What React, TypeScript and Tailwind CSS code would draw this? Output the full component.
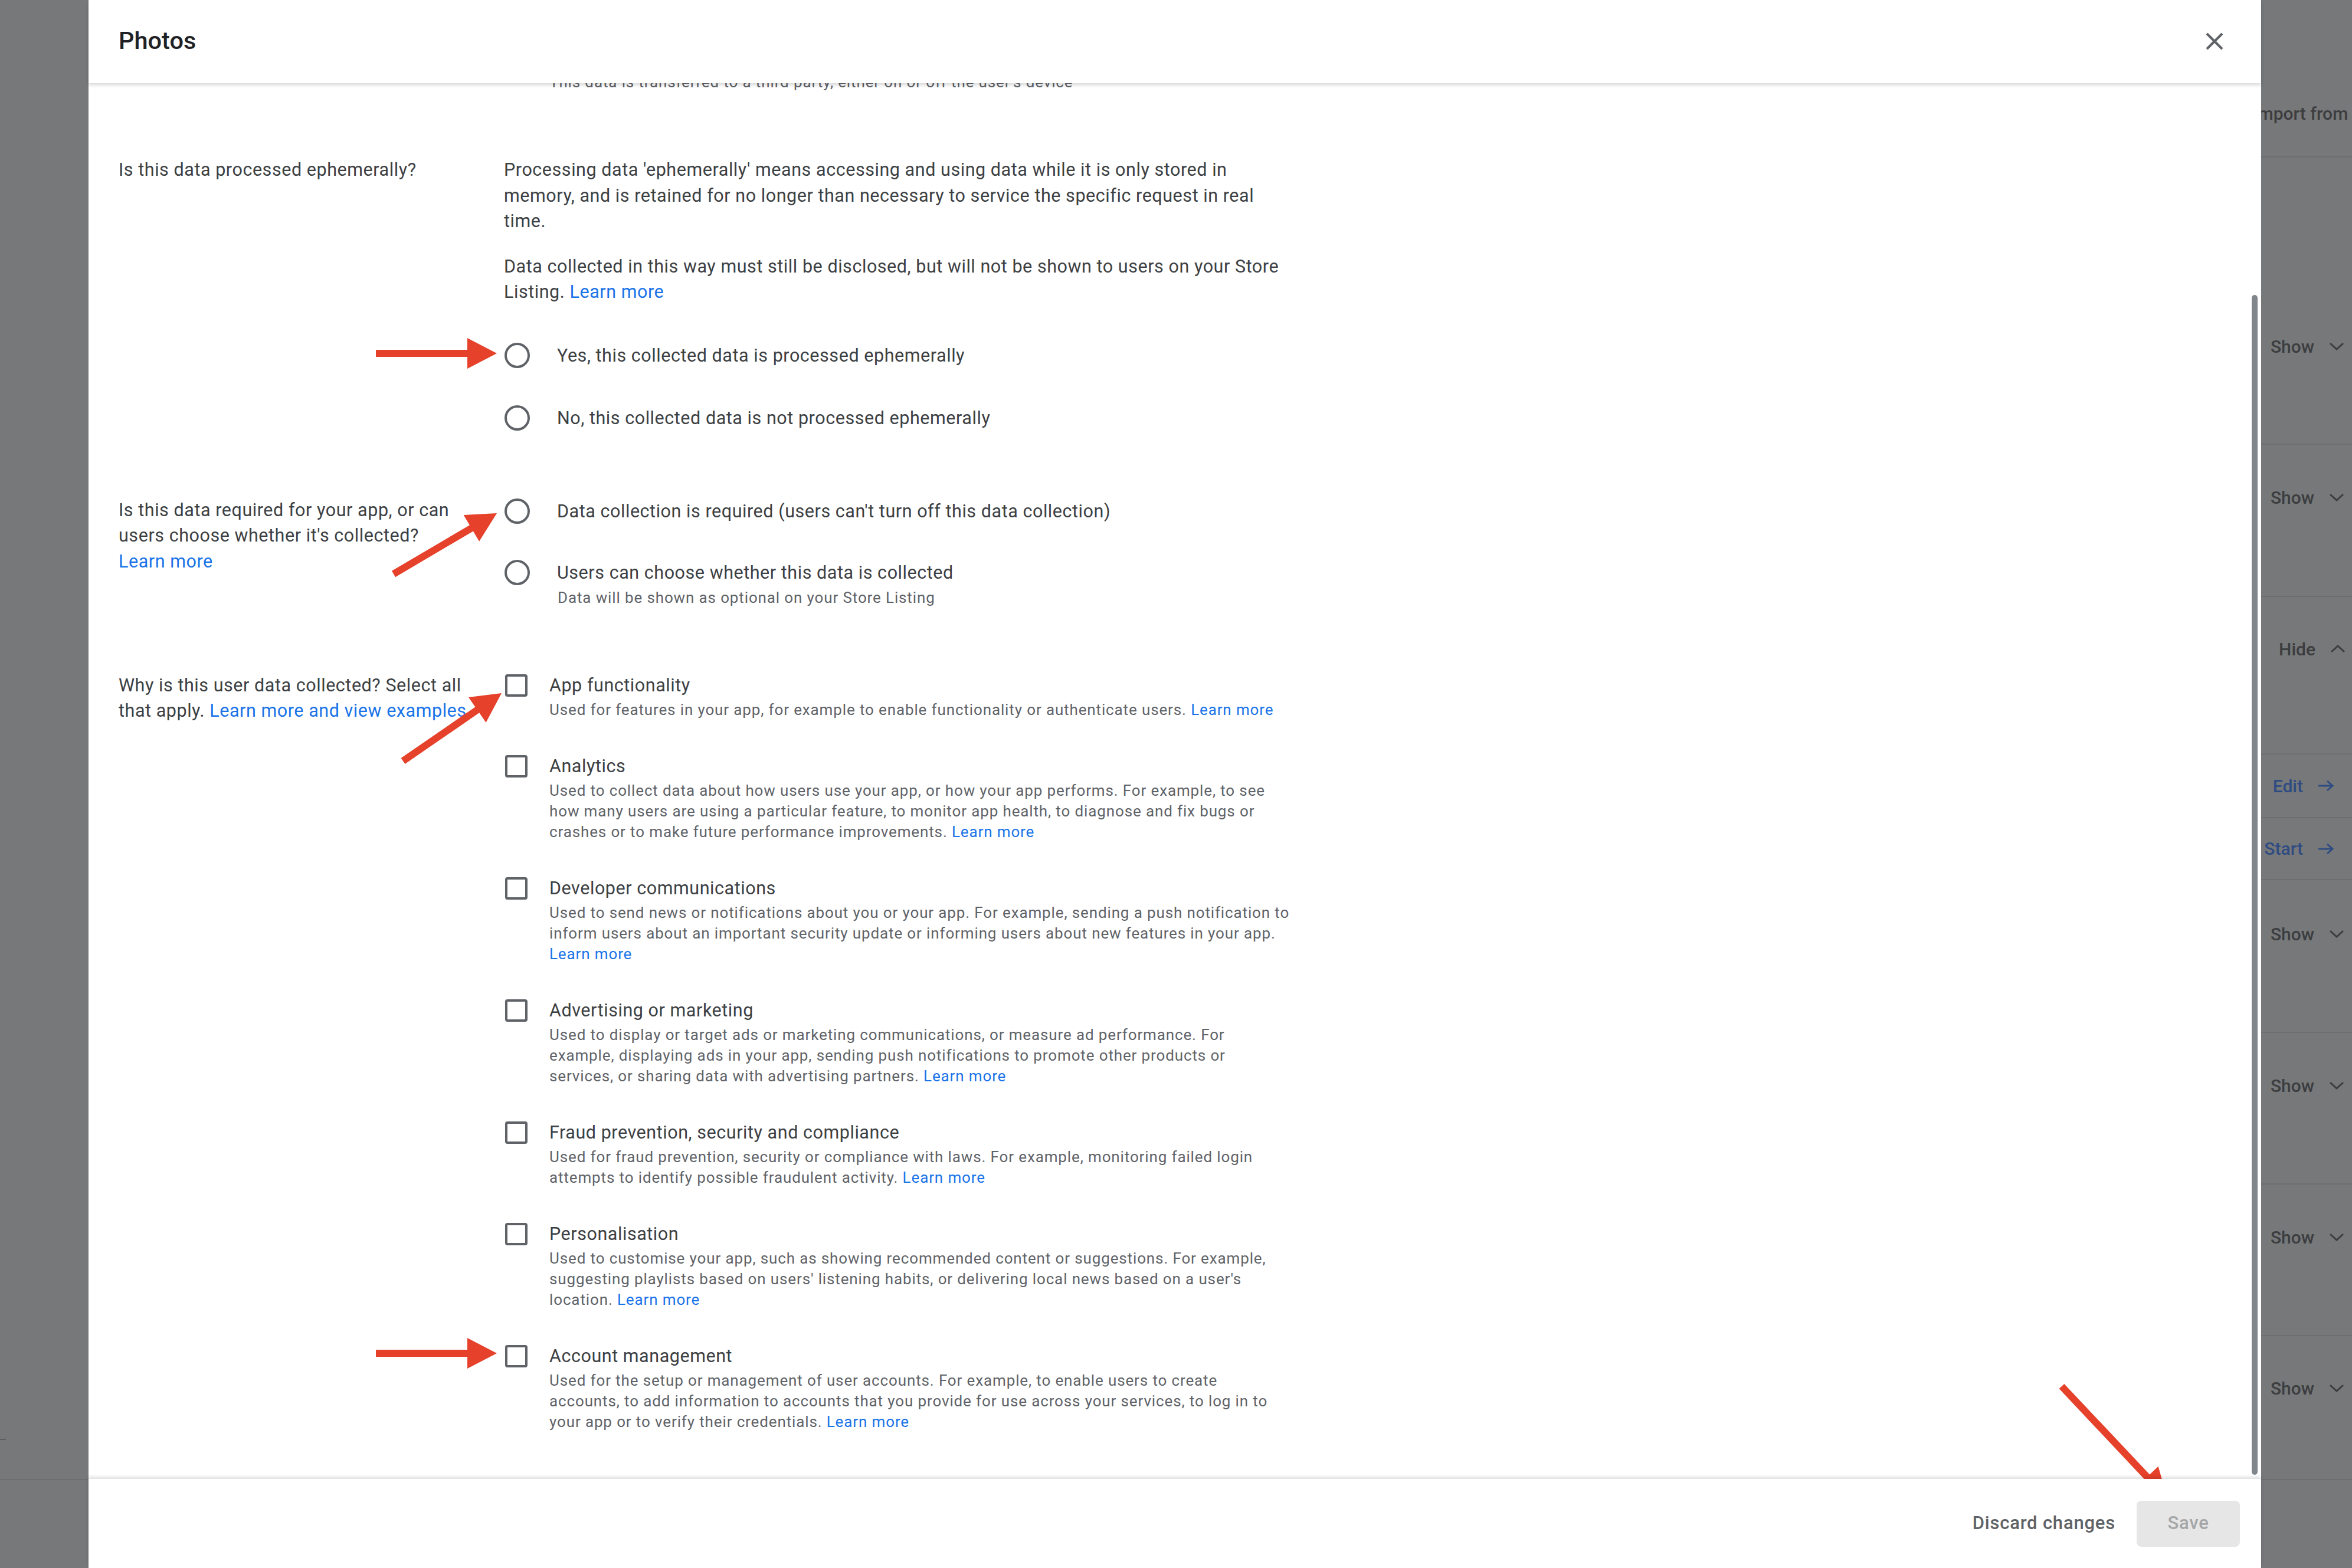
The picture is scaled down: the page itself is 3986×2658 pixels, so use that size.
import React from 'react'

type Arrow = { x1: number; y1: number; x2: number; y2: number }

const ARROWS: Arrow[] = [
    { x1: 637, y1: 599, x2: 842, y2: 599 },
    { x1: 667, y1: 973, x2: 842, y2: 870 },
    { x1: 683, y1: 1290, x2: 850, y2: 1175 },
    { x1: 637, y1: 2294, x2: 842, y2: 2294 },
    { x1: 3494, y1: 2350, x2: 3673, y2: 2540 },
]

const PURPOSES: { title: string; lines: string[] }[] = [
    {
        title: 'App functionality',
        lines: ['Used for features in your app, for example to enable functionality or authenticate users.'],
    },
    {
        title: 'Analytics',
        lines: [
            'Used to collect data about how users use your app, or how your app performs. For example, to see',
            'how many users are using a particular feature, to monitor app health, to diagnose and fix bugs or',
            'crashes or to make future performance improvements.',
        ],
    },
    {
        title: 'Developer communications',
        lines: [
            'Used to send news or notifications about you or your app. For example, sending a push notification to',
            'inform users about an important security update or informing users about new features in your app.',
            '',
        ],
    },
    {
        title: 'Advertising or marketing',
        lines: [
            'Used to display or target ads or marketing communications, or measure ad performance. For',
            'example, displaying ads in your app, sending push notifications to promote other products or',
            'services, or sharing data with advertising partners.',
        ],
    },
    {
        title: 'Fraud prevention, security and compliance',
        lines: [
            'Used for fraud prevention, security or compliance with laws. For example, monitoring failed login',
            'attempts to identify possible fraudulent activity.',
        ],
    },
    {
        title: 'Personalisation',
        lines: [
            'Used to customise your app, such as showing recommended content or suggestions. For example,',
            "suggesting playlists based on users' listening habits, or delivering local news based on a user's",
            'location.',
        ],
    },
    {
        title: 'Account management',
        lines: [
            'Used for the setup or management of user accounts. For example, to enable users to create',
            'accounts, to add information to accounts that you provide for use across your services, to log in to',
            'your app or to verify their credentials.',
        ],
    },
]

function arrowPoints({ x1, y1, x2, y2 }: Arrow) {
    const dx = x2 - x1
    const dy = y2 - y1
    const len = Math.hypot(dx, dy)
    const ux = dx / len
    const uy = dy / len
    const nx = -uy
    const ny = ux
    const s = 6
    const h = 26
    const bx = x2 - ux * 50
    const by = y2 - uy * 50
    const pts = [
        [x1 + nx * s, y1 + ny * s],
        [bx + nx * s, by + ny * s],
        [bx + nx * h, by + ny * h],
        [x2, y2],
        [bx - nx * h, by - ny * h],
        [bx - nx * s, by - ny * s],
        [x1 - nx * s, y1 - ny * s],
    ]
    return pts.map((p) => p.join(',')).join(' ')
}

const LearnMore = ({ children = 'Learn more' }: { children?: string }) => (
    <a className="text-[#1a73e8] cursor-pointer">{children}</a>
)

function Chevron({ up = false }: { up?: boolean }) {
    return (
        <svg width="26" height="14" viewBox="0 0 26 14" fill="none" stroke="#3c3d3f" strokeWidth="3">
            <polyline points={up ? '2,12 13,2 24,12' : '2,2 13,12 24,2'} />
        </svg>
    )
}

function RightArrow() {
    return (
        <svg width="27" height="20" viewBox="0 0 27 20" fill="none" stroke="#2f4c82" strokeWidth="3">
            <line x1="1" y1="10" x2="25" y2="10" />
            <polyline points="16,2 25,10 16,18" />
        </svg>
    )
}

function BackdropRow({ h, pt, label, kind, pr }: { h: string; pt?: string; label: string; kind: 'show' | 'hide' | 'link'; pr: string }) {
    return (
        <div className={`${h} ${pt ?? ''} border-t-2 border-[#6d6e70] flex ${pt ? 'items-start' : 'items-center'} justify-end ${pr}`}>
            <div className="flex items-center gap-[25px] h-[44px]">
                <span className={`text-[30px] font-medium ${kind === 'link' ? 'text-[#2f4c82]' : 'text-[#3c3d3f]'}`}>{label}</span>
                {kind === 'link' ? <RightArrow /> : <Chevron up={kind === 'hide'} />}
            </div>
        </div>
    )
}

function Radio({ label }: { label: string }) {
    return (
        <div className="flex items-center h-[44px]">
            <div className="ml-px w-[43px] h-[43px] rounded-full border-[4px] border-[#5f6368] shrink-0"></div>
            <span className="ml-[46px] whitespace-nowrap">{label}</span>
        </div>
    )
}

function Purpose({ title, lines }: { title: string; lines: string[] }) {
    return (
        <div className="flex">
            <div className="h-[44px] flex items-center shrink-0">
                <div className="ml-[2px] w-[38px] h-[38px] rounded-[4px] border-[4px] border-[#5f6368]"></div>
            </div>
            <div className="ml-[37px]">
                <div className="h-[44px] whitespace-nowrap">{title}</div>
                <div className="mt-[2px] text-[26px] tracking-[0.87px] leading-[35px] text-[#5f6368]">
                    {lines.map((line, i) => (
                        <div key={i} className="whitespace-nowrap h-[35px]">
                            {line}
                            {i === lines.length - 1 && (
                                <>
                                    {line ? ' ' : ''}
                                    <LearnMore />
                                </>
                            )}
                        </div>
                    ))}
                </div>
            </div>
        </div>
    )
}

export default function App() {
    return (
        <div className="relative w-[3986px] h-[2658px] overflow-hidden bg-[#77787a] font-['Roboto','Liberation_Sans',sans-serif]">
            {/* page behind the dialog */}
            <div className="flex h-full">
                <div className="w-[150px] flex flex-col">
                    <div className="h-[2439px]"></div>
                    <div className="h-[2px] w-[10px] bg-[#5e5f61]"></div>
                    <div className="h-[66px]"></div>
                    <div className="flex-1 border-t-2 border-[#6d6e70]"></div>
                </div>
                <div className="flex-1"></div>
                <div className="w-[300px] flex flex-col">
                    <div className="h-[265px] pt-[171px] pl-[132px]">
                        <span className="text-[30px] font-medium text-[#3c3d3f] whitespace-nowrap leading-[44px]">Import from</span>
                    </div>
                    <BackdropRow h="h-[487px]" pt="pt-[298px]" label="Show" kind="show" pr="pr-[13px]" />
                    <BackdropRow h="h-[258px]" pt="pt-[67px]" label="Show" kind="show" pr="pr-[13px]" />
                    <BackdropRow h="h-[267px]" pt="pt-[66px]" label="Hide" kind="hide" pr="pr-[11px]" />
                    <BackdropRow h="h-[108px]" label="Edit" kind="link" pr="pr-[31px]" />
                    <BackdropRow h="h-[105px]" label="Start" kind="link" pr="pr-[31px]" />
                    <BackdropRow h="h-[259px]" pt="pt-[69px]" label="Show" kind="show" pr="pr-[13px]" />
                    <BackdropRow h="h-[257px]" pt="pt-[67px]" label="Show" kind="show" pr="pr-[13px]" />
                    <BackdropRow h="h-[257px]" pt="pt-[67px]" label="Show" kind="show" pr="pr-[13px]" />
                    <BackdropRow h="h-[244px]" pt="pt-[66px]" label="Show" kind="show" pr="pr-[13px]" />
                    <div className="flex-1 border-t-2 border-[#6d6e70]"></div>
                </div>
            </div>

            {/* dialog */}
            <div className="absolute top-0 bottom-0 left-[150px] w-[3682px] bg-white flex flex-col">
                <header className="relative z-10 h-[141px] shrink-0 bg-white flex items-center justify-between pl-[51px] pr-[64px] shadow-[0_3px_6px_rgba(0,0,0,0.16)]">
                    <h1 className="text-[41.5px] font-medium text-[#202124] -mt-[3px]">Photos</h1>
                    <svg width="30" height="30" viewBox="0 0 30 30" stroke="#5f6368" strokeWidth="4" className="-mt-[2px]">
                        <line x1="2" y1="2" x2="28" y2="28" />
                        <line x1="28" y1="2" x2="2" y2="28" />
                    </svg>
                </header>

                <div className="relative flex-1 overflow-hidden">
                    <div className="-mt-[19px] pl-[51px] text-[30.5px] tracking-[0.55px] leading-[43.5px] text-[#3c4043]">
                        <div className="ml-[730px] text-[26px] tracking-[0.87px] leading-[35px] text-[#5f6368] whitespace-nowrap">
                            This data is transferred to a third party, either on or off the user's device
                        </div>

                        {/* ephemeral */}
                        <div className="flex mt-[109px]">
                            <div className="w-[653px] shrink-0 pr-[40px]">Is this data processed ephemerally?</div>
                            <div>
                                <p className="whitespace-nowrap">
                                    Processing data 'ephemerally' means accessing and using data while it is only stored in
                                    <br />
                                    memory, and is retained for no longer than necessary to service the specific request in real
                                    <br />
                                    time.
                                </p>
                                <p className="mt-[33px] whitespace-nowrap">
                                    Data collected in this way must still be disclosed, but will not be shown to users on your Store
                                    <br />
                                    Listing. <LearnMore />
                                </p>
                                <div className="mt-[64px]">
                                    <Radio label="Yes, this collected data is processed ephemerally" />
                                </div>
                                <div className="mt-[62px]">
                                    <Radio label="No, this collected data is not processed ephemerally" />
                                </div>
                            </div>
                        </div>

                        {/* required */}
                        <div className="flex mt-[112px]">
                            <div className="w-[653px] shrink-0 whitespace-nowrap">
                                Is this data required for your app, or can
                                <br />
                                users choose whether it's collected?
                                <br />
                                <LearnMore />
                            </div>
                            <div className="pt-[2px]">
                                <Radio label="Data collection is required (users can't turn off this data collection)" />
                                <div className="mt-[60px]">
                                    <Radio label="Users can choose whether this data is collected" />
                                </div>
                                <div className="mt-[3px] ml-[91px] text-[26px] tracking-[0.87px] leading-[35px] text-[#5f6368] whitespace-nowrap">
                                    Data will be shown as optional on your Store Listing
                                </div>
                            </div>
                        </div>

                        {/* purposes */}
                        <div className="flex mt-[109px]">
                            <div className="w-[653px] shrink-0 whitespace-nowrap">
                                Why is this user data collected? Select all
                                <br />
                                that apply. <LearnMore>Learn more and view examples</LearnMore>
                            </div>
                            <div className="flex flex-col gap-[56px]">
                                {PURPOSES.map((p) => (
                                    <Purpose key={p.title} title={p.title} lines={p.lines} />
                                ))}
                            </div>
                        </div>
                    </div>

                    <div className="absolute right-[6px] top-[359px] w-[10px] h-[2000px] rounded-full bg-[#80868b]"></div>
                </div>

                <footer className="relative z-10 h-[151px] shrink-0 bg-white flex items-center justify-end pr-[36px] shadow-[0_-3px_6px_rgba(0,0,0,0.14)]">
                    <button className="h-[78px] px-[24px] mr-[12px] text-[31px] tracking-[0.8px] font-medium text-[#5f6368]">Discard changes</button>
                    <button className="h-[78px] w-[175px] rounded-[8px] bg-[#e6e6e6] text-[31px] tracking-[0.8px] font-medium text-[#a5a6a8]">Save</button>
                </footer>
            </div>

            {/* annotation arrows */}
            <svg className="absolute inset-0 pointer-events-none" width="3986" height="2658">
                {ARROWS.map((a, i) => (
                    <polygon key={i} points={arrowPoints(a)} fill="#e5412b" />
                ))}
            </svg>
        </div>
    )
}
